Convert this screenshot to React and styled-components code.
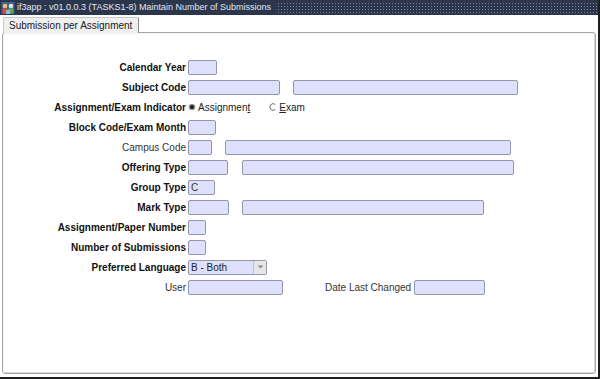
import React from 'react';
import styled, { createGlobalStyle } from 'styled-components';

const GlobalStyle = createGlobalStyle`
  html, body {
    margin: 0;
    padding: 0;
    background: #fff;
  }
  body {
    font-family: "Liberation Sans", Arial, sans-serif;
  }
`;

const AppIcon = () => (
  <svg width="14" height="14" viewBox="0 0 14 14">
    <rect x="0.5" y="1" width="13" height="12" fill="#3d5f9c" />
    <circle cx="4" cy="5" r="2.3" fill="#f2c15a" />
    <rect x="1.5" y="7.5" width="5" height="5" fill="#d94a3a" />
    <circle cx="10" cy="5" r="2.3" fill="#e9e4d0" />
    <rect x="7.5" y="7.5" width="5" height="5" fill="#5fae4a" />
    <rect x="5" y="9" width="4" height="4" fill="#8fb8ea" />
  </svg>
);

const Radio = ({ checked }) => (
  <svg width="8" height="8" viewBox="0 0 8 8">
    {checked ? (
      <>
        <circle cx="4" cy="4" r="3.3" fill="#9a9a9a" />
        <circle cx="4" cy="4" r="2" fill="#1c1c1c" />
      </>
    ) : (
      <path d="M6.2 1.4 A3.3 3.3 0 1 0 6.2 6.6" fill="none" stroke="#6a6a6a" strokeWidth="1" />
    )}
  </svg>
);

const Arrow = () => (
  <svg width="7" height="4" viewBox="0 0 7 4">
    <path d="M0.5 0.5 L6.5 0.5 L3.5 3.5 Z" fill="#8a8a8a" />
  </svg>
);

export default function App() {
  return (
    <>
      <GlobalStyle />
      <Window>
        <TitleBar>
          <AppIcon />
          <TitleText>if3app : v01.0.0.3 (TASKS1-8) Maintain Number of Submissions</TitleText>
          <Dots />
        </TitleBar>
        <Body>
          <TabStrip>
            <Tab>Submission per Assignment</Tab>
          </TabStrip>
          <Panel>
            <Row>
              <Label>Calendar Year</Label>
              <Field $w={29} />
            </Row>
            <Row>
              <Label>Subject Code</Label>
              <Field $w={92} />
              <Field $w={225} $gap={13} />
            </Row>
            <Row>
              <Label>Assignment/Exam Indicator</Label>
              <RadioItem>
                <Radio checked />
                <span>Assignmen<u>t</u></span>
              </RadioItem>
              <RadioItem $gap={19}>
                <Radio />
                <span><u>E</u>xam</span>
              </RadioItem>
            </Row>
            <Row>
              <Label>Block Code/Exam Month</Label>
              <Field $w={28} />
            </Row>
            <Row>
              <Label $plain>Campus Code</Label>
              <Field $w={24} />
              <Field $w={286} $gap={13} />
            </Row>
            <Row>
              <Label>Offering Type</Label>
              <Field $w={40} />
              <Field $w={272} $gap={14} />
            </Row>
            <Row>
              <Label>Group Type</Label>
              <Field $w={27}>C</Field>
            </Row>
            <Row>
              <Label>Mark Type</Label>
              <Field $w={41} />
              <Field $w={242} $gap={13} />
            </Row>
            <Row>
              <Label>Assignment/Paper Number</Label>
              <Field $w={18} />
            </Row>
            <Row>
              <Label>Number of Submissions</Label>
              <Field $w={18} />
            </Row>
            <Row>
              <Label>Preferred Language</Label>
              <Select>
                <SelectValue>B - Both</SelectValue>
                <SelectButton>
                  <Arrow />
                </SelectButton>
              </Select>
            </Row>
            <Row>
              <Label $plain>User</Label>
              <Field $w={95} />
              <InlineLabel>Date Last Changed</InlineLabel>
              <Field $w={71} />
            </Row>
          </Panel>
        </Body>
      </Window>
    </>
  );
}

const Window = styled.div`
  width: 600px;
  height: 379px;
  box-sizing: border-box;
  border-right: 2px solid #1e1e1e;
  border-bottom: 2px solid #1e1e1e;
  display: flex;
  flex-direction: column;
  background: #fff;
  overflow: hidden;
`;

const TitleBar = styled.div`
  height: 15px;
  flex: none;
  display: flex;
  align-items: center;
  background: #2b364c;
  padding-left: 1px;
`;

const TitleText = styled.div`
  color: #e4e7ef;
  font-size: 9px;
  line-height: 15px;
  margin-left: 2px;
  white-space: nowrap;
`;

const Dots = styled.div`
  flex: 1;
  height: 11px;
  margin-left: 6px;
  background-color: #2b364c;
  background-image: radial-gradient(circle, #7d8aa6 0.8px, transparent 1px);
  background-size: 3px 3px;
`;

const Body = styled.div`
  flex: 1;
  display: flex;
  flex-direction: column;
  padding: 2px 2px 3px 2px;
  min-height: 0;
`;

const TabStrip = styled.div`
  display: flex;
  padding-left: 1px;
  height: 15px;
  flex: none;
  position: relative;
  z-index: 1;
`;

const Tab = styled.div`
  height: 16px;
  box-sizing: border-box;
  padding: 0 6px 0 5px;
  font-size: 10px;
  line-height: 15px;
  color: #202020;
  background: #efefef;
  border: 1px solid #c8c8c8;
  border-right-color: #8a8a8a;
  border-bottom: none;
  border-radius: 2px 2px 0 0;
  white-space: nowrap;
`;

const Panel = styled.div`
  flex: 1;
  box-sizing: border-box;
  border: 1px solid #a6a6a6;
  border-radius: 3px;
  box-shadow: inset -1px -1px 0 #d9d9d9, inset 1px 1px 0 #f4f4f4;
  padding-top: 24px;
  display: flex;
  flex-direction: column;
`;

const Row = styled.div`
  display: flex;
  align-items: center;
  height: 20px;
`;

const Label = styled.div`
  width: 183px;
  flex: none;
  margin-right: 2px;
  text-align: right;
  font-size: 10px;
  font-weight: ${(p) => (p.$plain ? 400 : 700)};
  color: ${(p) => (p.$plain ? '#333' : '#111')};
  white-space: nowrap;
`;

const InlineLabel = styled.div`
  margin-left: 42px;
  margin-right: 3px;
  font-size: 10px;
  color: #333;
  white-space: nowrap;
`;

const Field = styled.div`
  width: ${(p) => p.$w}px;
  margin-left: ${(p) => p.$gap || 0}px;
  height: 15px;
  box-sizing: border-box;
  flex: none;
  background: #dfe0fb;
  border: 1px solid #9396ae;
  border-radius: 2px;
  font-size: 10px;
  line-height: 13px;
  padding-left: 2px;
  color: #333;
`;

const RadioItem = styled.div`
  display: flex;
  align-items: center;
  gap: 2px;
  margin-left: ${(p) => p.$gap || 0}px;
  font-size: 10px;
  color: #222;
  white-space: nowrap;

  u {
    text-decoration: underline;
  }
`;

const Select = styled.div`
  width: 79px;
  height: 15px;
  box-sizing: border-box;
  display: flex;
  background: #dfe0fb;
  border: 1px solid #9396ae;
  border-radius: 2px;
`;

const SelectValue = styled.div`
  flex: 1;
  font-size: 10px;
  line-height: 13px;
  padding-left: 2px;
  color: #222;
`;

const SelectButton = styled.div`
  width: 12px;
  display: flex;
  align-items: center;
  justify-content: center;
  background: #e6e6e6;
  border-left: 1px solid #c4c4c4;
`;
